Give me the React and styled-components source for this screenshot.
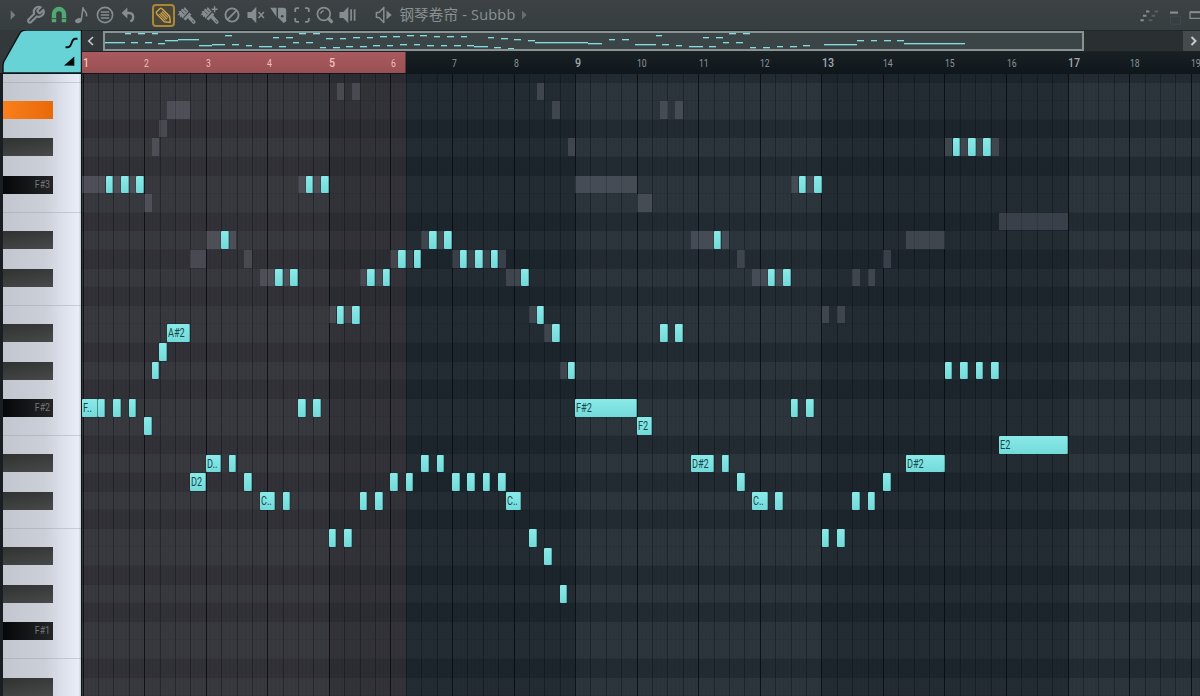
import React from "react";
import styled, { createGlobalStyle } from "styled-components";

const STEP = 7.7;
const ROW = 18.6;
const TOP_ROW = 8.6;
const MAP_STEP = 6.72;

const NAMES = ["C", "C#", "D", "D#", "E", "F", "F#", "G", "G#", "A", "A#", "B"];

const pitch = name => {
  const octave = Number(name.slice(-1));
  return octave * 12 + NAMES.indexOf(name.slice(0, -1));
};

const TOP_PITCH = pitch("B3");

// [key, start step, length in steps, label]
const NOTES = [
  ["F#2", 0, 2, "F.."], ["F#2", 2], ["F#2", 4], ["F#2", 6],
  ["F2", 8], ["G#2", 9], ["A2", 10], ["A#2", 11, 3, "A#2"],
  ["D2", 14, 2, "D2"], ["D#2", 16, 2, "D.."], ["D#2", 19], ["D2", 21],
  ["C#2", 23, 2, "C.."], ["C#2", 26], ["F#2", 28], ["F#2", 30],
  ["B1", 32], ["B1", 34], ["C#2", 36], ["C#2", 38],
  ["D2", 40], ["D2", 42], ["D#2", 44], ["D#2", 46],
  ["D2", 48], ["D2", 50], ["D2", 52], ["D2", 54],
  ["C#2", 55, 2, "C.."], ["B1", 58], ["A#1", 60], ["G#1", 62],
  ["F#2", 64, 8, "F#2"], ["F2", 72, 2, "F2"], ["A#2", 75], ["A#2", 77],
  ["D#2", 79, 3, "D#2"], ["D#2", 83], ["D2", 85],
  ["C#2", 87, 2, "C.."], ["C#2", 90], ["F#2", 92], ["F#2", 94],
  ["B1", 96], ["B1", 98], ["C#2", 100], ["C#2", 102], ["D2", 104],
  ["D#2", 107, 5, "D#2"], ["G#2", 112], ["G#2", 114], ["G#2", 116], ["G#2", 118],
  ["E2", 119, 9, "E2"],
  ["F#3", 3], ["F#3", 5], ["F#3", 7], ["D#3", 18], ["C#3", 25], ["C#3", 27],
  ["F#3", 29], ["F#3", 31], ["B2", 33], ["B2", 35], ["C#3", 37], ["C#3", 39],
  ["D3", 41], ["D3", 43], ["D#3", 45], ["D#3", 47], ["D3", 49], ["D3", 51], ["D3", 53],
  ["C#3", 57], ["B2", 59], ["A#2", 61], ["G#2", 63],
  ["D#3", 82], ["C#3", 89], ["C#3", 91], ["F#3", 93], ["F#3", 95],
  ["G#3", 113], ["G#3", 115], ["G#3", 117]
].map(([key, start, length = 1, label = ""]) => ({ pitch: pitch(key), start, length, label }));

// the layer behind plays the same pattern one octave higher
const GHOSTS = NOTES.map(n => ({ ...n, pitch: n.pitch + 12 })).filter(n => n.pitch <= TOP_PITCH);

const ROWS = Array.from({ length: 34 }, (_, i) => {
  const p = TOP_PITCH + 1 - i;
  const name = NAMES[p % 12];
  return { p, name, octave: Math.floor(p / 12), sharp: name.length === 2 };
});

const GlobalStyle = createGlobalStyle`
  * { box-sizing: border-box; }
  body {
    margin: 0;
    overflow: hidden;
    background: #23292c;
    font-family: Roboto, "Liberation Sans", sans-serif;
  }
`;

const Window = styled.div`
  width: 1200px;
  height: 696px;
  display: flex;
  flex-direction: column;
  overflow: hidden;
  background: #373d3f;
`;

const Toolbar = styled.header`
  height: 30px;
  flex: none;
  display: flex;
  align-items: center;
  background: linear-gradient(to bottom, #3d4244, #373e40);
  color: #868d90;
`;

const Slot = styled.span`
  width: ${props => props.w || 23.15}px;
  height: 30px;
  flex: none;
  display: flex;
  align-items: center;
  justify-content: center;
  color: ${props => props.tint || "inherit"};
  > svg {
    display: block;
    flex: none;
    overflow: visible;
  }
`;

const ActiveTool = styled(Slot)`
  height: 23px;
  border: 2px solid #a98738;
  border-radius: 4px;
  background: #494538;
  color: #c8a04a;
`;

const Gap = styled.span`
  flex: ${props => (props.w ? `0 0 ${props.w}px` : 1)};
`;

const Title = styled.span`
  width: 118px;
  margin-left: 4px;
  white-space: nowrap;
  font: 14.5px/28px "Open Sans", "Noto Sans CJK SC", sans-serif;
  letter-spacing: 0.2px;
  color: #8a9194;
`;

const Header = styled.div`
  height: 44px;
  flex: none;
  display: flex;
  border-bottom: 1px solid #10171b;
`;

const Corner = styled.div`
  width: 82px;
  flex: none;
  > svg {
    display: block;
  }
`;

const Rulers = styled.div`
  flex: 1;
  min-width: 0;
`;

const Overview = styled.div`
  height: 22px;
  display: flex;
  border-top: 1px solid #22282b;
  border-bottom: 1px solid #1c2225;
  background: #2a3032;
`;

const ScrollButton = styled.div`
  width: ${props => props.w}px;
  flex: none;
  display: flex;
  align-items: center;
  justify-content: center;
  background: ${props => props.bg};
  color: #c6cbcd;
`;

const MiniMap = styled.div`
  position: relative;
  width: 981px;
  height: 20px;
  flex: none;
  overflow: hidden;
  border: 2px solid #8b9293;
  background: #3b4447;
`;

const MiniNote = styled.i`
  position: absolute;
  height: 1px;
  background: #86dcdc;
  box-shadow: 0 1px 0 rgba(120, 214, 214, 0.35);
`;

const Timeline = styled.div`
  height: 21px;
  display: flex;
  overflow: hidden;
  padding-left: 0.6px;
  background: linear-gradient(
      to bottom,
      #a85a5e,
      #9a5052
    ) 0 0 / 323.5px 100% no-repeat,
    linear-gradient(to bottom, #182024, #10171c);
`;

const BarNumber = styled.span`
  flex: 0 0 ${STEP * 8}px;
  color: ${props => (props.selected ? "#f0c0c0" : props.major ? "#a2a9ad" : "#8d9599")};
  font-size: ${props => (props.major ? 13 : 10.5)}px;
  line-height: ${props => (props.major ? 22 : 24)}px;
  > b {
    display: inline-block;
    font-weight: ${props => (props.major ? 500 : 400)};
    transform: scaleX(0.82);
    transform-origin: 0 50%;
  }
`;

const Body = styled.div`
  flex: 1;
  min-height: 0;
  display: flex;
`;

const Keyboard = styled.div`
  width: 82px;
  flex: none;
  overflow: hidden;
  border-left: 3px solid #191e22;
  border-right: 1px solid #0d1418;
  background: linear-gradient(to right, #c2c6ce, #ccd0d9 55%, #dfe3ee 80%, #e9edf7 97%, #c5cad0);
`;

const Key = styled.div`
  height: ${props => (props.cut ? TOP_ROW : ROW)}px;
  border-bottom: ${props => (props.edge ? "1px solid rgba(150, 156, 170, 0.4)" : "0")};
`;

const BlackKey = styled.div`
  width: 50px;
  height: 18px;
  padding-right: 3px;
  text-align: right;
  color: #767778;
  font-size: 11px;
  line-height: 18px;
  background: ${props =>
    props.lit
      ? "linear-gradient(to right, #f97f1c, #e9690a)"
      : props.root
      ? "linear-gradient(to right, #060708, #242526)"
      : "linear-gradient(170deg, #303232, #484949)"};
  > b {
    display: inline-block;
    font-weight: 400;
    transform: scaleX(0.8);
    transform-origin: 100% 50%;
  }
`;

const Grid = styled.div`
  flex: 1;
  min-width: 0;
  display: grid;
  grid-template: 1fr / 1fr;
  overflow: hidden;
  background: #232b31;
`;

const Layer = styled.div`
  grid-area: 1 / 1;
  min-width: 0;
  min-height: 0;
  overflow: hidden;
`;

const Lane = styled.div`
  height: ${props => (props.cut ? TOP_ROW : ROW)}px;
  background: ${props => (props.light ? "#2d353c" : "#232b32")};
  border-bottom: 1px solid ${props => (props.light ? "#293138" : "#232a31")};
`;

const Strips = styled(Layer)`
  display: flex;
  padding-left: 0.6px;
`;

const Phrase = styled.div`
  flex: 0 0 ${STEP * 32}px;
  background: ${props => (props.dim ? "rgba(8, 18, 26, 0.24)" : "transparent")};
`;

const Selection = styled.div`
  width: 323.5px;
  height: 100%;
  background: rgba(92, 68, 72, 0.25);
`;

const Beat = styled.div`
  flex: 0 0 ${STEP * 2}px;
  border-left: 1px solid ${props => (props.bar ? "rgba(4, 9, 14, 0.78)" : "rgba(10, 16, 22, 0.42)")};
  background: repeating-linear-gradient(
    to right,
    transparent 0 2.85px,
    rgba(10, 16, 22, 0.06) 2.85px 3.85px
  );
`;

const NoteLayer = styled(Layer)`
  position: relative;
`;

const Ghost = styled.div`
  position: absolute;
  height: 17.6px;
  background: rgba(148, 148, 158, 0.25);
`;

const Note = styled.div`
  position: absolute;
  height: 17.8px;
  overflow: hidden;
  padding-left: 1px;
  border-radius: 1px;
  background: linear-gradient(to bottom, #8aeae8, #73dad9);
  box-shadow: inset -1px 0 0 rgba(30, 92, 98, 0.4), 0 0 0 0.5px rgba(10, 40, 45, 0.5);
  color: #17474c;
  font-size: 12px;
  line-height: 18px;
  white-space: nowrap;
  > b {
    display: inline-block;
    font-weight: 400;
    transform: scaleX(0.76);
    transform-origin: 0 50%;
  }
`;

const place = n => ({
  left: n.start * STEP + 0.4,
  top: TOP_ROW + (TOP_PITCH - n.pitch) * ROW,
  width: n.length * STEP
});

const placeMini = n => {
  const below = pitch("F#2") - n.pitch;
  return {
    left: n.start * MAP_STEP - 0.5,
    top: Math.floor(9.5 + below * (below < 0 ? 0.78 : 0.7)),
    width: n.length * MAP_STEP
  };
};

const Icon = ({ children, size = 22 }) => (
  <svg
    width={size}
    height={size}
    viewBox={`0 0 ${size} ${size}`}
    fill="none"
    stroke="currentColor"
    strokeWidth="1.6"
    strokeLinejoin="round"
  >
    {children}
  </svg>
);

const Solid = props => <path fill="currentColor" stroke="none" {...props} />;

const Brush = ({ plus }) => (
  <Icon>
    <Solid d="M9.8 3 13.6 7.6 7.4 14.6 6.4 12.2 5.2 13.6 4.6 10.8 2.4 11.4 4.4 8.6 3.2 7.4 6.2 6.8 6.6 4.4 8.4 5.4z" />
    <path d="m6.6 7.4 3 3M9 5.6l2.8 2.8" stroke="#3a4042" strokeWidth=".8" />
    <Solid d="m14.4 8.4 2 2.2-5.8 6-2.2-1.8z" />
    <path d="m14.6 13.6 4.2 4.4" strokeWidth="3.6" strokeLinecap="round" />
    <path d="m17.6 16.8 1 1" stroke="#3a4042" strokeWidth="1" strokeLinecap="round" />
    {plus && <path d="M16.6 2.2v6M13.6 5.2h6" strokeWidth="1.5" />}
  </Icon>
);

const Speaker = () => <Solid d="M2.5 8h3.8l5-5.2v16.4l-5-5.2H2.5z" />;

function Tools() {
  return (
    <Toolbar>
      <Gap w={2} />
      <Slot w={22.5}>
        <Icon><Solid d="M8.7 6.2 13.3 11l-4.6 4.8z" opacity=".8" /></Icon>
      </Slot>
      <Slot>
        <Icon>
          <path
            d="M12.6 6.3a.9.9 0 0 0 0 1.2l1.5 1.5a.9.9 0 0 0 1.2 0l3.1-3.1a5 5 0 0 1-6.6 6.5l-5.9 5.9a1.9 1.9 0 0 1-2.6-2.6l5.9-5.9a5 5 0 0 1 6.5-6.6z"
            strokeWidth="2.1"
          />
        </Icon>
      </Slot>
      <Slot tint="#4fa970">
        <Icon>
          <path d="M6 18.2V10a5 5 0 0 1 10 0v8.2" strokeWidth="4.4" />
          <path d="M3.5 14.6h5M13.5 14.6h5" stroke="#2f5c45" strokeWidth="1" />
        </Icon>
      </Slot>
      <Slot>
        <Icon>
          <ellipse cx="7.4" cy="16.7" rx="3.4" ry="2.4" fill="currentColor" stroke="none" transform="rotate(-20 7.4 16.7)" />
          <path d="M10.2 16.5 12 3.8c.4 3.6 4.8 3.4 3.4 8.6" strokeWidth="1.6" />
        </Icon>
      </Slot>
      <Slot>
        <Icon>
          <circle cx="11" cy="11" r="7.6" />
          <path d="M6.8 8h8.4M6.8 11h8.4M6.8 14h8.4" strokeWidth="1.5" />
        </Icon>
      </Slot>
      <Slot>
        <Icon>
          <Solid d="M3.6 8.9 9.4 3.4v11z" />
          <path d="M8 9h3c5.4 0 5.2 6.6 1.4 8.6" strokeWidth="2.3" />
        </Icon>
      </Slot>
      <Gap w={11.3} />
      <ActiveTool>
        <Icon size={19}>
          <path d="m2.8 5.8 3-3a1.6 1.6 0 0 1 2.2 0l7.6 7.6.7 6-6-.7L2.8 8a1.6 1.6 0 0 1 0-2.2z" strokeWidth="1.5" />
          <path d="m5.4 8.2 6.2 6.2M8.1 5.5l6.2 6.2" strokeWidth="1.1" />
          <path d="m6.7 6.8 6.4 6.4" strokeWidth="1.5" />
        </Icon>
      </ActiveTool>
      <Slot><Brush /></Slot>
      <Slot><Brush plus /></Slot>
      <Slot>
        <Icon>
          <circle cx="11" cy="11" r="6.6" strokeWidth="1.9" />
          <path d="m6.4 15.6 9.2-9.2" strokeWidth="1.9" />
        </Icon>
      </Slot>
      <Slot>
        <Icon>
          <Speaker />
          <path d="m13.5 8 5.4 6M18.9 8l-5.4 6" strokeWidth="1.6" />
        </Icon>
      </Slot>
      <Slot>
        <Icon>
          <Solid d="M2.2 3.8h6.3V13z" />
          <path d="M10 3.8h5.4c2 0 2.8.8 2.8 2.6v11L15.6 19 10 13.6z" fill="currentColor" stroke="none" />
          <circle cx="14.2" cy="12.2" r="1.3" fill="#3a4042" stroke="none" />
        </Icon>
      </Slot>
      <Slot>
        <Icon>
          <path
            d="M4.2 8V5.8a1.6 1.6 0 0 1 1.6-1.6H8M14 4.2h2.2a1.6 1.6 0 0 1 1.6 1.6V8M17.8 14v2.2a1.6 1.6 0 0 1-1.6 1.6H14M8 17.8H5.8a1.6 1.6 0 0 1-1.6-1.6V14"
            strokeWidth="1.8"
          />
        </Icon>
      </Slot>
      <Slot>
        <Icon>
          <circle cx="9.8" cy="10" r="6.4" strokeWidth="1.7" />
          <path d="M6.8 9.8a3.1 3.1 0 0 1 3-3" strokeWidth="1.3" />
          <path d="m14.8 14.9 2.6 2.7" strokeWidth="3.4" strokeLinecap="round" />
        </Icon>
      </Slot>
      <Slot>
        <Icon>
          <Speaker />
          <path d="M14.1 5.2v11.6M17.6 5.2v11.6" strokeWidth="1.7" />
        </Icon>
      </Slot>
      <Gap w={12.5} />
      <Slot>
        <Icon>
          <path d="M3.4 8.4h2.6l4.8-5v15.2l-4.8-5h-2.6z" strokeWidth="1.5" />
          <Solid d="M13.5 6.6 18.7 11l-5.2 4.4z" />
        </Icon>
      </Slot>
      <Title>钢琴卷帘 - Subbb</Title>
      <Slot w={14}>
        <Icon size={12}><Solid d="M4 1.6 8.6 6 4 10.4z" opacity=".6" /></Icon>
      </Slot>
      <Gap />
      <Slot w={26}>
        <Icon>
          <path d="M8 7.4h3.4M5 11.8h3.4M2.4 16.2h3.4" strokeWidth="2" />
          <path d="M16.5 7.4h3.6M13.6 11.8h3.6M10.8 16.2h3.6" strokeWidth="2" opacity=".4" />
        </Icon>
      </Slot>
      <Slot w={24}>
        <Icon>
          <path d="M7 8.6h8" strokeWidth="2.2" />
          <path d="M7.5 12.2h10v8h-10z" strokeWidth="1" opacity=".13" />
        </Icon>
      </Slot>
      <Slot w={14}>
        <Icon><path d="M8 8.2h12v6.2H8z" strokeWidth="1.3" /><path d="M8 8.2h12" strokeWidth="2" /></Icon>
      </Slot>
    </Toolbar>
  );
}

export default function App() {
  return (
    <Window>
      <GlobalStyle />
      <Tools />
      <Header>
        <Corner>
          <svg width="82" height="43" viewBox="0 0 82 43">
            <path d="M0 43V0h82v43z" fill="#33393b" />
            <path d="M3 43V35.5Q3 33 4.2 31L19.6 3.6Q21.6 0 26 0H81.5V43z" fill="#67d3d7" stroke="#0e1417" strokeWidth="1.4" />
            <path d="M65.5 17.2h2.6c4.4 0 2.6-8.4 7-8.4h2.4" fill="none" stroke="#081012" strokeWidth="1.9" />
            <path d="M64 35.4 74.3 26.4v9.4z" fill="#050a0b" />
          </svg>
        </Corner>
        <Rulers>
          <Overview>
            <ScrollButton w={21} bg="#33393b">
              <svg width="16" height="12" viewBox="0 0 16 12" fill="none" stroke="currentColor" strokeWidth="1.6">
                <path d="M8 2 3.8 6 8 10" />
              </svg>
            </ScrollButton>
            <MiniMap>
              {NOTES.map((n, i) => <MiniNote key={i} style={placeMini(n)} />)}
            </MiniMap>
            <Gap />
            <ScrollButton w={17} bg="#454b4d">
              <svg width="12" height="12" viewBox="0 0 12 12" fill="none" stroke="currentColor" strokeWidth="2">
                <path d="M5.5 2 9.5 6l-4 4" />
              </svg>
            </ScrollButton>
          </Overview>
          <Timeline>
            {Array.from({ length: 19 }, (_, i) => (
              <BarNumber key={i} major={i % 4 === 0 ? 1 : 0} selected={i < 6 ? 1 : 0}>
                <b>{i + 1}</b>
              </BarNumber>
            ))}
          </Timeline>
        </Rulers>
      </Header>
      <Body>
        <Keyboard>
          {ROWS.map((row, i) => (
            <Key key={row.p} cut={i === 0 ? 1 : 0} edge={row.name === "C" || row.name === "F" ? 1 : 0}>
              {row.sharp && (
                <BlackKey lit={row.p === pitch("A#3") ? 1 : 0} root={row.name === "F#" ? 1 : 0}>
                  {row.name === "F#" && <b>F#{row.octave}</b>}
                </BlackKey>
              )}
            </Key>
          ))}
        </Keyboard>
        <Grid>
          <Layer>
            {ROWS.map((row, i) => (
              <Lane
                key={row.p}
                cut={i === 0 ? 1 : 0}
                light={row.sharp || row.name === "F" || row.name === "B" ? 1 : 0}
              />
            ))}
          </Layer>
          <Strips>
            {[0, 1, 2, 3, 4].map(i => <Phrase key={i} dim={i % 2} />)}
          </Strips>
          <Layer>
            <Selection />
          </Layer>
          <Strips>
            {Array.from({ length: 73 }, (_, i) => <Beat key={i} bar={i % 4 === 0 ? 1 : 0} />)}
          </Strips>
          <NoteLayer>
            {GHOSTS.map((n, i) => <Ghost key={i} style={place(n)} />)}
            {NOTES.map((n, i) => (
              <Note key={i} style={place(n)}>{n.label && <b>{n.label}</b>}</Note>
            ))}
          </NoteLayer>
        </Grid>
      </Body>
    </Window>
  );
}
